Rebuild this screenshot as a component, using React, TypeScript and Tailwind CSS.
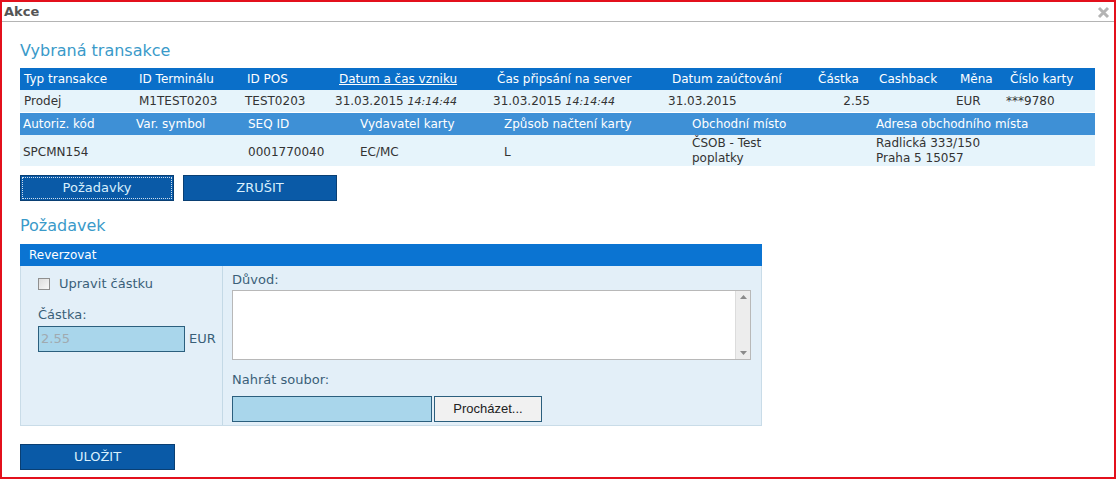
import React from "react";

const font = { fontFamily: "'DejaVu Sans', Verdana, sans-serif" };

const cols1 = [
  { h: "Typ transakce", w: "w-[115px]" },
  { h: "ID Terminálu", w: "w-[108px]" },
  { h: "ID POS", w: "w-[92px]" },
  { h: "Datum a čas vzniku", w: "w-[158px]", u: true },
  { h: "Čas připsání na server", w: "w-[175px]" },
  { h: "Datum zaúčtování", w: "w-[146px]" },
  { h: "Částka", w: "w-[61px]" },
  { h: "Cashback", w: "w-[81px]" },
  { h: "Měna", w: "w-[50px]" },
  { h: "Číslo karty", w: "flex-1" },
];

const cols2 = [
  { h: "Autoriz. kód", w: "w-[113px]" },
  { h: "Var. symbol", w: "w-[112px]" },
  { h: "SEQ ID", w: "w-[112px]" },
  { h: "Vydavatel karty", w: "w-[144px]" },
  { h: "Způsob načtení karty", w: "w-[188px]" },
  { h: "Obchodní místo", w: "w-[184px]" },
  { h: "Adresa obchodního místa", w: "flex-1" },
];

function DateTime({ d, t }: { d: string; t: string }) {
  return (
    <span>
      {d} <i className="text-[11px]">{t}</i>
    </span>
  );
}

export default function App() {
  const row1: React.ReactNode[] = [
    "Prodej",
    "M1TEST0203",
    "TEST0203",
    <DateTime d="31.03.2015" t="14:14:44" />,
    <DateTime d="31.03.2015" t="14:14:44" />,
    "31.03.2015",
    "2.55",
    "",
    "EUR",
    "***9780",
  ];
  const row2: React.ReactNode[] = [
    "SPCMN154",
    "",
    "0001770040",
    "EC/MC",
    "L",
    <>
      ČSOB - Test
      <br />
      poplatky
    </>,
    <>
      Radlická 333/150
      <br />
      Praha 5 15057
    </>,
  ];

  return (
    <div
      style={font}
      className="w-[1116px] h-[479px] border-2 border-[#e3101c] bg-white overflow-hidden text-[12px] text-[#333]"
    >
      {/* title bar */}
      <div className="h-[20px] flex items-center justify-between pl-[2px] pr-[4px] border-b border-[#b4b4b4]">
        <span className="font-bold text-[13px] text-[#555] mt-[1px]">Akce</span>
        <svg width="13" height="13" viewBox="0 0 13 13" className="mt-[2px]">
          <path d="M2 2 L11 11 M11 2 L2 11" stroke="#b4b4b4" strokeWidth="3" />
        </svg>
      </div>

      <div className="pl-[18px] pr-[19px]">
        <h2 className="text-[16px] leading-[20px] text-[#3a9ac9] mt-[19px]">Vybraná transakce</h2>

        {/* transaction table */}
        <div className="mt-[7px]">
          <div className="flex h-[22px] items-center bg-[#0a6fc9] text-white">
            {cols1.map((c) => (
              <div key={c.h} className={`${c.w} pl-[4px] whitespace-nowrap`}>
                <span className={c.u ? "underline" : ""}>{c.h}</span>
              </div>
            ))}
          </div>
          <div className="flex h-[22px] items-center bg-[#e6f4fb]">
            {row1.map((v, i) => (
              <div
                key={i}
                className={`${cols1[i].w} whitespace-nowrap ${i === 6 ? "text-right pr-[1px]" : "pl-[4px]"} ${i === 2 || i === 3 ? "-ml-[2px] pr-[2px]" : ""}`}
              >
                {v}
              </div>
            ))}
          </div>
          <div className="flex h-[22px] items-center bg-[#3e90d6] text-white mt-[1px]">
            {cols2.map((c) => (
              <div key={c.h} className={`${c.w} pl-[3px] whitespace-nowrap`}>
                {c.h}
              </div>
            ))}
          </div>
          <div className="flex h-[31px] items-center bg-[#e6f4fb] pt-[3px]">
            {row2.map((v, i) => (
              <div
                key={i}
                className={`${cols2[i].w} pl-[3px] whitespace-nowrap ${i >= 5 ? "leading-[15px] -mt-[3px]" : ""}`}
              >
                {v}
              </div>
            ))}
          </div>
        </div>

        {/* action buttons */}
        <div className="flex gap-[9px] mt-[9px]">
          <button className="w-[154px] h-[26px] bg-[#0a5aa7] border border-[#0a3f73] text-[#d8f0fd] text-[13px] outline-1 outline-dotted outline-white/80 -outline-offset-[3px]">
            Požadavky
          </button>
          <button className="w-[154px] h-[26px] bg-[#0a5aa7] border border-[#0a3f73] text-[#d8f0fd] text-[13px]">
            ZRUŠIT
          </button>
        </div>

        <h2 className="text-[16px] leading-[20px] text-[#3a9ac9] mt-[15px]">Požadavek</h2>

        {/* request panel */}
        <div className="w-[742px] mt-[8px] border border-[#c9dce8] border-t-0">
          <div className="h-[22px] bg-[#0b74d2] text-white flex items-center pl-[9px] -mx-px">Reverzovat</div>
          <div className="flex h-[159px] bg-[#e3eff8]">
            <div className="w-[202px] border-r border-[#c4d9e6] pl-[17px] text-[#3a5f78]">
              <label className="flex items-center mt-[12px] h-[12px]">
                <span className="w-[12px] h-[12px] border border-[#8f8f8f] bg-gradient-to-br from-[#dcdcdc] to-[#f8f8f8] shrink-0" />
                <span className="ml-[9px] text-[13px]">Upravit částku</span>
              </label>
              <div className="mt-[17px] text-[13px] leading-[16px]">Částka:</div>
              <div className="flex items-center mt-[3px]">
                <div className="w-[147px] h-[26px] bg-[#a9d6eb] border border-[#2b5f7e] flex items-center pl-[2px] text-[#a0aab0] text-[13px]">
                  2.55
                </div>
                <span className="ml-[4px] text-[13px] text-[#3a5f78]">EUR</span>
              </div>
            </div>
            <div className="pl-[9px] text-[#3a5f78]">
              <div className="mt-[6px] text-[13px] leading-[16px]">Důvod:</div>
              <div className="mt-[2px] w-[519px] h-[70px] bg-white border border-[#b8b8b8] flex justify-end">
                <div className="w-[15px] h-full bg-[#ededed] border-l border-[#dcdcdc] flex flex-col items-center justify-between py-[4px]">
                  <svg width="7" height="4" viewBox="0 0 7 4">
                    <path d="M0 4 L3.5 0 L7 4 Z" fill="#8a8a8a" />
                  </svg>
                  <svg width="7" height="4" viewBox="0 0 7 4">
                    <path d="M0 0 L3.5 4 L7 0 Z" fill="#8a8a8a" />
                  </svg>
                </div>
              </div>
              <div className="mt-[12px] text-[13px] leading-[16px]">Nahrát soubor:</div>
              <div className="flex mt-[8px] gap-[2px]">
                <div className="w-[200px] h-[26px] bg-[#a9d6eb] border border-[#2b5f7e]" />
                <button
                  style={{ fontFamily: "'Liberation Sans', Arial, sans-serif" }}
                  className="w-[108px] h-[26px] bg-[#f1f1f1] border border-[#2b5f7e] text-[13px] text-[#222]"
                >
                  Procházet...
                </button>
              </div>
            </div>
          </div>
        </div>

        <button className="mt-[18px] w-[155px] h-[26px] bg-[#0a5aa7] border border-[#0a3f73] text-[#d8f0fd] text-[13px]">
          ULOŽIT
        </button>
      </div>
    </div>
  );
}
